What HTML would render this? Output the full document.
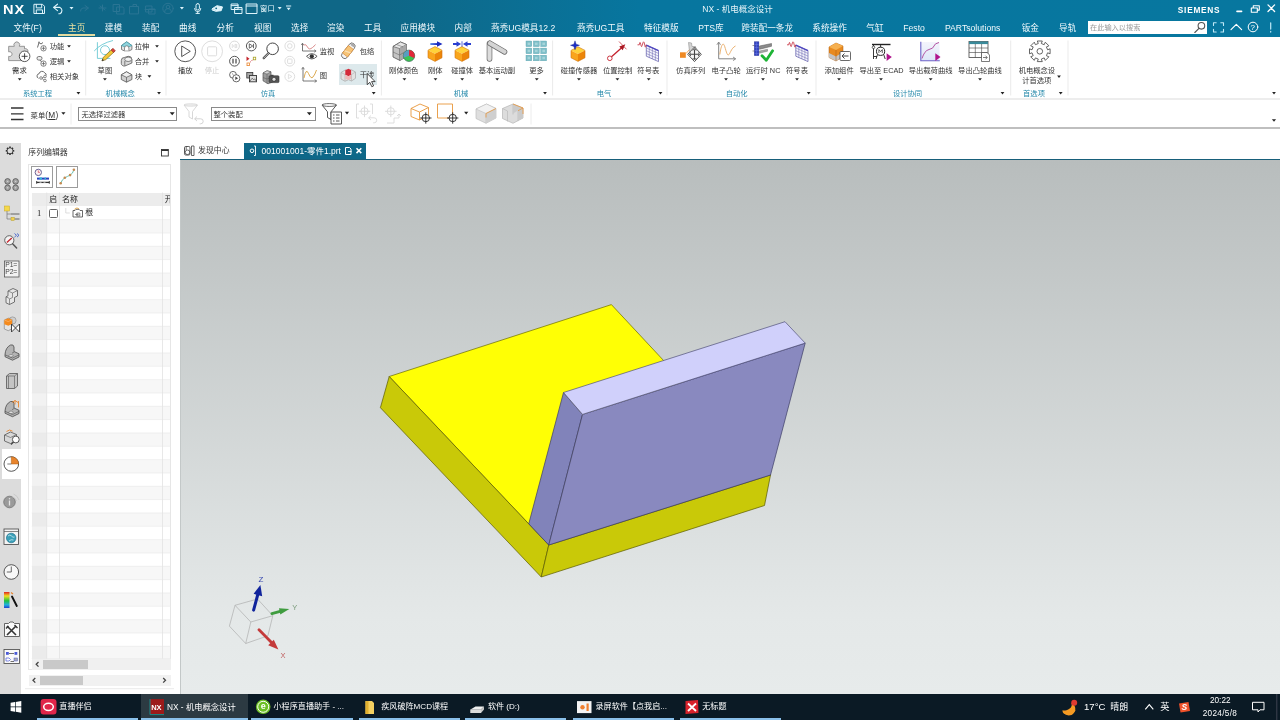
<!DOCTYPE html>
<html lang="zh-CN">
<head>
<meta charset="utf-8">
<title>NX - 机电概念设计</title>
<style>
html,body{margin:0;padding:0;}
body{width:1280px;height:720px;overflow:hidden;position:relative;background:#fff;
 font-family:"Liberation Sans","Noto Sans CJK SC",sans-serif;font-size:9px;color:#222;}
#w{position:absolute;left:0;top:0;width:1280px;height:720px;will-change:transform;}
.a{position:absolute;}
.t{position:absolute;white-space:nowrap;line-height:12px;height:12px;}
#hdr{left:0;top:0;width:1280px;height:37px;background:#0e6584;}
#hdr{background:linear-gradient(90deg,#0f6787 0%,#0f6787 30%,#07769f 50%,#07779f 100%);height:36.500px}
#hdr .t{color:#fff;font-size:9px;}
#hdr .m{top:21.500px;font-size:8.650px;color:#f2fafd;}
#ribbon{left:0;top:37px;width:1280px;height:61px;background:#fff;}
.r{font-size:7.3px;color:#333;line-height:10px;height:10px}
.g{color:#2488aa;}
.sep{position:absolute;width:1px;background:#e2e2e2;top:41px;height:56px;}
.dd{position:absolute;width:0;height:0;border-left:2.5px solid transparent;border-right:2.5px solid transparent;border-top:3px solid #222;}
#tb{left:0;top:99.500px;width:1280px;height:29.800px;background:#fff;border-bottom:2px solid #bfbfbf;box-sizing:border-box;}
#side{left:0;top:142.500px;width:21px;height:551px;background:#dcdcdc;}
#nav{left:21px;top:140px;width:158.500px;height:553px;background:#fff;}
#view{left:179.500px;top:160px;width:1100.500px;height:534px;border-left:1px solid #c3c8c8;box-sizing:border-box;background:linear-gradient(#b8bdbd 0%,#e4e8e8 85%,#e7ebeb 100%);}
#tabline{left:179.500px;top:158.500px;width:1100.500px;height:1.500px;background:#175f7a;}
#status{display:none}
#task{left:0;top:693.500px;width:1280px;height:26.500px;background:#0b1a25;}
#task .t{color:#fff;font-size:8.100px;}
.ul{top:24.700px;height:1.800px;background:#8ac0ea;}
</style>
</head>
<body>
<div id="w">
<div id="hdr" class="a">
<div class="t" style="left:2.700px;top:2.500px;font-size:13px;font-weight:bold;letter-spacing:0.900px;transform:scaleX(1.120);transform-origin:0 0;line-height:14px;height:14px">NX</div>
<svg class="a" style="left:0;top:0" width="1280" height="37" viewBox="0 0 1280 37" fill="none" stroke="#dff4fb" stroke-width="1" stroke-linecap="round" stroke-linejoin="round">
<!-- save -->
<path d="M34.3 4.3h8.2l2 2v7.2h-10.2z"/><path d="M36.3 4.5v3.4h5.4v-3.4M36.3 13.3v-3.4h6.2v3.4" />
<!-- undo -->
<path d="M57.5 4.2l-4 3.2 4 3.2M53.8 7.4h6.2a3.6 3.6 0 0 1 0 6.4h-1.2" stroke-width="1.1"/>
<path d="M69.5 7l2 2.4 2-2.4z" fill="#dff4fb" stroke="none"/>
<!-- redo dim -->
<g stroke="#2a7594">
<path d="M85 5.5l3.5 2.5-3.5 2.5M88 8h-5a3 3 0 0 0-2.5 3"/>
<path d="M99 8h7M102.5 5v6M100 6l5 4"/>
<path d="M113.5 4.5h6v7h-6zM117 7h6l1 1.5v5.5h-7z"/>
<path d="M129.5 13.5v-7h3.5v-2h3.5v2h2v7zM133 6.500h5"/>
<path d="M146 6h6v6h-6zM149 9h6v5h-6zM145 9.500h10"/>
<circle cx="168" cy="8.500" r="5.200"/><circle cx="168" cy="7" r="1.800"/><path d="M164.500 12a3.500 3.500 0 0 1 7 0"/>
</g>
<path d="M179.900 7l2 2.400 2-2.400z" fill="#dff4fb" stroke="none"/>
<!-- mic -->
<rect x="196" y="3.600" width="3.400" height="6.400" rx="1.700"/><path d="M194.600 8.500a3.100 3.100 0 0 0 6.200 0M197.700 11.600v1.800M196 13.400h3.400"/>
<!-- tag -->
<path d="M212.500 8.500l4.500-2.800 5.500 1.200-1.300 3.800-5.200 0.600z" fill="#dff4fb"/><path d="M212.500 8.500l-0.500 1.500 3 1"/>
<circle cx="216.200" cy="8.300" r="0.900" fill="#0e6584" stroke="none"/>
<!-- windows stack -->
<path d="M231.500 4h6.500v5.500h-6.500zM235 7.500h7v6h-7zM235 9.300h7M231.500 5.600h6.500"/>
<!-- window -->
<path d="M246.500 4h10.500v9.500h-10.500zM246.500 6h10.500"/>
<path d="M277.700 7l2 2.400 2-2.400z" fill="#dff4fb" stroke="none"/>
<path d="M286.600 7.800l2 2.400 2-2.400z" fill="#dff4fb" stroke="none"/><path d="M286.400 6h4.400"/>
<!-- win controls -->
<path d="M1237 11.400h4.600" stroke-width="1.600" stroke="#fff"/>
<path d="M1251.300 8h6v4.300h-6zM1253.300 7.800v-2h6v4.300h-1.800" stroke="#fff" stroke-width="1.100"/>
<path d="M1268 4.900l6.600 6.600M1274.600 4.900l-6.600 6.600" stroke="#fff" stroke-width="1.300"/>
<!-- right icons -->
<path d="M1213.500 25.500v-2.700h2.700M1220.800 22.800h2.700v2.700M1223.500 29.300v2.700h-2.700M1216.200 32h-2.700v-2.700" stroke="#bfe9f7" stroke-width="1.100"/>
<path d="M1231 29.600l5.300-5.200 5.300 5.200" stroke="#fff" stroke-width="1.200"/>
<circle cx="1253" cy="27" r="4.800" stroke="#fff"/>
<path d="M1270.700 22.800v6.300M1270.700 31.300v0.800" stroke="#bfe9f7" stroke-width="1.200"/>
</svg>
<div class="t" style="left:1250.600px;top:21.500px;font-size:8px;line-height:11px;height:11px">?</div>
<div class="t" style="left:260px;top:3px;font-size:7.400px;line-height:11px;height:11px;color:#e6f6fb">窗口</div>
<div class="t" style="left:702.300px;top:4px;font-size:8.500px;line-height:11px;height:11px;color:#e6f4f9">NX - 机电概念设计</div>
<div class="t" style="left:1177.800px;top:5.300px;font-size:8.300px;font-weight:bold;letter-spacing:0.750px;line-height:11px;height:11px">SIEMENS</div>
<div class="a" style="left:57.500px;top:34.300px;width:37px;height:2px;background:#e3dba0"></div>
<div class="a" style="left:1088px;top:20.500px;width:118.500px;height:13px;background:#fff"></div>
<div class="t" style="left:1090px;top:21.500px;font-size:7.200px;color:#9a9a9a;line-height:11px;height:11px">在此输入以搜索</div>
<svg class="a" style="left:1192px;top:20px" width="16" height="15" viewBox="0 0 16 15" fill="none" stroke="#555" stroke-width="1.100" stroke-linecap="round"><circle cx="9.400" cy="5.800" r="3.300"/><path d="M7 8.300l-4.200 4.200"/></svg>
<div class="t m" style="left:13.5px">文件(F)</div>
<div class="t m" style="left:68px;color:#e9e0a0">主页</div>
<div class="t m" style="left:104.75px">建模</div>
<div class="t m" style="left:142px">装配</div>
<div class="t m" style="left:179px">曲线</div>
<div class="t m" style="left:216.5px">分析</div>
<div class="t m" style="left:254px">视图</div>
<div class="t m" style="left:291px">选择</div>
<div class="t m" style="left:327px">渲染</div>
<div class="t m" style="left:364px">工具</div>
<div class="t m" style="left:400.5px">应用模块</div>
<div class="t m" style="left:454.5px">内部</div>
<div class="t m" style="left:491px">燕秀UG模具12.2</div>
<div class="t m" style="left:577px">燕秀UG工具</div>
<div class="t m" style="left:644px">特征模版</div>
<div class="t m" style="left:698.3px">PTS库</div>
<div class="t m" style="left:741.3px">跨装配一条龙</div>
<div class="t m" style="left:812.3px">系统操作</div>
<div class="t m" style="left:866.3px">气缸</div>
<div class="t m" style="left:903.3px">Festo</div>
<div class="t m" style="left:945px">PARTsolutions</div>
<div class="t m" style="left:1021.7px">钣金</div>
<div class="t m" style="left:1059px">导轨</div>
</div>
<div id="ribbon" class="a"></div>
<div class="a" style="left:0;top:97.500px;width:1280px;height:2.200px;background:#ededed"></div>
<div class="t r " style="left:19.4px;top:65.9px;transform:translateX(-50%)">需求</div>
<div class="t r " style="left:49.8px;top:42.2px">功能</div>
<div class="t r " style="left:49.8px;top:57.2px">逻辑</div>
<div class="t r " style="left:49.8px;top:72.3px">相关对象</div>
<div class="t r g" style="left:37.5px;top:89.0px;transform:translateX(-50%)">系统工程</div>
<div class="t r " style="left:104.9px;top:65.9px;transform:translateX(-50%)">草图</div>
<div class="t r " style="left:134.8px;top:42.2px">拉伸</div>
<div class="t r " style="left:134.8px;top:57.2px">合并</div>
<div class="t r " style="left:134.8px;top:72.3px">块</div>
<div class="t r g" style="left:120.2px;top:89.0px;transform:translateX(-50%)">机械概念</div>
<div class="t r " style="left:185.3px;top:66.1px;transform:translateX(-50%)">播放</div>
<div class="t r " style="left:212.1px;top:66.1px;transform:translateX(-50%);color:#cfcfcf">停止</div>
<div class="t r " style="left:319.7px;top:47.1px">监视</div>
<div class="t r " style="left:319.7px;top:71.0px">图</div>
<div class="t r " style="left:359.8px;top:47.1px">包络</div>
<div class="a" style="left:339px;top:64.300px;width:37.500px;height:20.500px;background:#dde9ec"></div>
<div class="t r " style="left:359.8px;top:70.3px">干涉</div>
<div class="t r g" style="left:268.0px;top:89.0px;transform:translateX(-50%)">仿真</div>
<div class="t r " style="left:403.7px;top:65.9px;transform:translateX(-50%)">刚体颜色</div>
<div class="t r " style="left:435.2px;top:65.9px;transform:translateX(-50%)">刚体</div>
<div class="t r " style="left:462.1px;top:65.9px;transform:translateX(-50%)">碰撞体</div>
<div class="t r " style="left:496.9px;top:65.9px;transform:translateX(-50%)">基本运动副</div>
<div class="t r " style="left:536.6px;top:65.9px;transform:translateX(-50%)">更多</div>
<div class="t r g" style="left:461.0px;top:89.0px;transform:translateX(-50%)">机械</div>
<div class="t r " style="left:579.0px;top:65.9px;transform:translateX(-50%)">碰撞传感器</div>
<div class="t r " style="left:617.6px;top:65.9px;transform:translateX(-50%)">位置控制</div>
<div class="t r " style="left:648.3px;top:65.9px;transform:translateX(-50%)">符号表</div>
<div class="t r g" style="left:604.0px;top:89.0px;transform:translateX(-50%)">电气</div>
<div class="t r " style="left:690.7px;top:65.9px;transform:translateX(-50%)">仿真序列</div>
<div class="t r " style="left:726.1px;top:65.9px;transform:translateX(-50%)">电子凸轮</div>
<div class="t r " style="left:763.2px;top:65.9px;transform:translateX(-50%)">运行时 NC</div>
<div class="t r " style="left:797.0px;top:65.9px;transform:translateX(-50%)">符号表</div>
<div class="t r g" style="left:736.6px;top:89.0px;transform:translateX(-50%)">自动化</div>
<div class="t r " style="left:839.1px;top:65.9px;transform:translateX(-50%)">添加组件</div>
<div class="t r " style="left:881.5px;top:65.9px;transform:translateX(-50%)">导出至 ECAD</div>
<div class="t r " style="left:930.6px;top:65.9px;transform:translateX(-50%)">导出载荷曲线</div>
<div class="t r " style="left:980.0px;top:65.9px;transform:translateX(-50%)">导出凸轮曲线</div>
<div class="t r g" style="left:907.5px;top:89.0px;transform:translateX(-50%)">设计协同</div>
<div class="t r " style="left:1036.9px;top:65.6px;transform:translateX(-50%)">机电概念设</div>
<div class="t r " style="left:1036.8px;top:76.3px;transform:translateX(-50%)">计首选项</div>
<div class="t r g" style="left:1034.0px;top:89.0px;transform:translateX(-50%)">首选项</div>
<svg class="a" style="left:0;top:0" width="1280" height="100" viewBox="0 0 1280 100">
<path d="M8.700 46.300h5.600a2.900 2.900 0 1 1 5 0h5.200v2.500a2.500 2.500 0 1 1 0 4.600v7.200h-15.800v-4.300a2.400 2.400 0 1 0 0-4.400z" fill="#d9d9d9" stroke="#8c8c8c" stroke-width="0.900"/>
<circle cx="24.600" cy="56.300" r="5.300" fill="#fff" stroke="#444" stroke-width="0.900"/><path d="M21.600 56.300h6M24.600 53.300v6" stroke="#333" stroke-width="0.900"/>
<path d="M17.8 78.2h3.800l-1.900 2.400z" fill="#222" stroke="none"/>
<path d="M37.500 47.500l1.500-5 2 1.500 2-1.500" fill="none" stroke="#5a5a5a" stroke-width="0.900"/><circle cx="39" cy="42.500" r="1" fill="#888"/>
<circle cx="43.5" cy="48.3" r="2.7" fill="#fff" stroke="#555" stroke-width="0.700"/><path d="M41.6 48.3h3.8M43.5 46.4v3.8" stroke="#555" stroke-width="0.700"/>
<rect x="37" y="56.500" width="5" height="3.600" rx="1.700" fill="#eee" stroke="#5a5a5a" stroke-width="0.800"/><path d="M40 60l2 2.500" stroke="#5a5a5a" stroke-width="0.800"/>
<circle cx="43.5" cy="63.6" r="2.7" fill="#fff" stroke="#555" stroke-width="0.700"/><path d="M41.6 63.6h3.8M43.5 61.7v3.8" stroke="#555" stroke-width="0.700"/>
<path d="M38.500 78.300a2.400 2.400 0 0 1 0.600-4.600a3 3 0 0 1 5.600-0.800a2.300 2.300 0 0 1 1.500 2.500" fill="none" stroke="#5a5a5a" stroke-width="0.900"/><circle cx="41" cy="78" r="1.300" fill="#fff" stroke="#5a5a5a" stroke-width="0.700"/><circle cx="45" cy="76.500" r="1.300" fill="#fff" stroke="#5a5a5a" stroke-width="0.700"/><circle cx="45" cy="80.500" r="1.300" fill="#fff" stroke="#5a5a5a" stroke-width="0.700"/><path d="M42 78l2-1M42 78.500l2 1.500" stroke="#5a5a5a" stroke-width="0.600"/>
<path d="M67.1 45.2h3.800l-1.900 2.400z" fill="#222" stroke="none"/>
<path d="M67.1 60.2h3.800l-1.900 2.400z" fill="#222" stroke="none"/>
<path d="M76.5 92.0h3.800l-1.900 2.400z" fill="#222" stroke="none"/>
<path d="M85.7 40.500V95.500" stroke="#ebebeb" stroke-width="1"/>
<path d="M94.200 51q6.500-7.500 18.800-10.500M97.400 42.200v16.200h13" fill="none" stroke="#6cc8d2" stroke-width="0.900"/><circle cx="105" cy="50.200" r="4.500" fill="none" stroke="#6cc8d2" stroke-width="0.900"/>
<g transform="rotate(-42.700 102 60.800)"><path d="M102 60.800l3.400-1.700h12.200v3.400h-12.200z" fill="#f2c838" stroke="#7a6420" stroke-width="0.600" stroke-linejoin="round"/><path d="M116 59.100h2.600v3.400h-2.600z" fill="#d8433b" stroke="#8a2a25" stroke-width="0.500"/><path d="M102 60.800l1.500-0.750v1.500z" fill="#333" stroke="#333" stroke-width="0.400"/></g>
<path d="M103.0 78.2h3.800l-1.900 2.400z" fill="#222" stroke="none"/>
<path d="M121.500 45.500l5.200-3.700 5.200 3.700v4l-2.600 1.300h-5.200l-2.600-1.300z" fill="#e4e4e4" stroke="#666" stroke-width="0.800"/><path d="M121.500 45.500l5.200-3.700 5.200 3.700-5.200 2.200z" fill="#8fd3dc" stroke="#3d9dac" stroke-width="0.700"/><path d="M124.500 50.500v-2.500a2.200 2.200 0 0 1 4.400 0v2.500" fill="#fff" stroke="#666" stroke-width="0.700"/>
<path d="M121.300 60.500a3 3 0 0 1 3-3l4-1.200a3.400 3.400 0 0 1 3.600 3.200v3.500l-7 3a3 2.600 0 0 1-3.600-2.500z" fill="#d8d8d8" stroke="#555" stroke-width="0.800"/><ellipse cx="128.200" cy="59.300" rx="3.500" ry="2.200" fill="#f2f2f2" stroke="#555" stroke-width="0.700"/><path d="M124.800 61v4.500" stroke="#555" stroke-width="0.700"/>
<path d="M121.300 74.800l5.200-3 5.400 3v4.700l-5.400 2.700-5.200-2.700z" fill="#cfcfcf" stroke="#555" stroke-width="0.800" stroke-linejoin="round"/><path d="M121.300 74.800l5.200-3 5.400 3-5.400 2.500z" fill="#efefef" stroke="#555" stroke-width="0.700" stroke-linejoin="round"/><path d="M126.500 77.300v4.900" stroke="#555" stroke-width="0.700"/>
<path d="M155.1 45.2h3.800l-1.900 2.400z" fill="#222" stroke="none"/>
<path d="M155.1 60.2h3.800l-1.900 2.400z" fill="#222" stroke="none"/>
<path d="M147.5 75.3h3.800l-1.900 2.400z" fill="#222" stroke="none"/>
<path d="M157.1 92.0h3.800l-1.900 2.400z" fill="#222" stroke="none"/>
<path d="M166.0 40.500V95.500" stroke="#ebebeb" stroke-width="1"/>
<circle cx="185.200" cy="51.300" r="10.400" fill="#fff" stroke="#444" stroke-width="0.900"/><path d="M181.700 46l8.600 5.300-8.600 5.300z" fill="none" stroke="#444" stroke-width="0.900" stroke-linejoin="round"/>
<circle cx="212.100" cy="51.300" r="10.400" fill="#fff" stroke="#d9d9d9" stroke-width="0.900"/><rect x="207.600" y="46.800" width="9" height="9" rx="1" fill="none" stroke="#d9d9d9" stroke-width="0.900"/>
<circle cx="234.5" cy="46.0" r="4.9" fill="#fff" stroke="#d5d5d5" stroke-width="0.900"/>
<path d="M232.300 44v4M236.700 44v4M235.800 44.200l-2.600 1.800 2.600 1.800z" fill="none" stroke="#d5d5d5" stroke-width="0.700"/>
<circle cx="234.5" cy="61.2" r="4.9" fill="#fff" stroke="#444" stroke-width="0.900"/>
<path d="M233 58.800v4.800M236 58.800v4.800" stroke="#444" stroke-width="1.200"/>
<circle cx="233" cy="74.800" r="3.400" fill="#fff" stroke="#444" stroke-width="0.800"/><circle cx="236.300" cy="78.300" r="3.600" fill="#fff" stroke="#444" stroke-width="0.800"/><path d="M235.300 76.600l2.800 1.700-2.800 1.700z" fill="#444"/><path d="M232 73.500l1.500 1.300" stroke="#444" stroke-width="0.600"/>
<circle cx="251.3" cy="46.0" r="4.9" fill="#fff" stroke="#444" stroke-width="0.900"/>
<path d="M249.300 43.800l3.400 2.200-3.400 2.200zM253.500 43.800v4.400" fill="none" stroke="#444" stroke-width="0.800"/>
<path d="M246.500 56.500l3 2.300-3 2.300z" fill="#c4262e"/><rect x="253.300" y="57.200" width="2.400" height="2.600" fill="none" stroke="#a8a020" stroke-width="0.800"/><rect x="247" y="63" width="2.400" height="2.600" fill="none" stroke="#e8842c" stroke-width="0.800"/><path d="M250.200 62.200l2.600-2.600" stroke="#c4262e" stroke-width="0.900" stroke-dasharray="1 0.700"/>
<rect x="246.800" y="72.500" width="6" height="5.500" fill="#aaa" stroke="#333" stroke-width="0.800"/><rect x="249.500" y="75.500" width="7" height="6.300" fill="#ddd" stroke="#333" stroke-width="0.900"/><path d="M250 81l2.200-2.800 1.500 1.600 1-1 1.500 2.200" fill="none" stroke="#333" stroke-width="0.600"/>
<circle cx="272.600" cy="48.800" r="5.800" fill="#fff" stroke="#444" stroke-width="1"/><path d="M268.500 53.300l-4.800 4.800" stroke="#444" stroke-width="2.200" stroke-linecap="round"/><path d="M268.500 53.300l-4.800 4.800" stroke="#fff" stroke-width="0.700" stroke-linecap="round"/>
<path d="M263 73l4-2.200 4 1 0 3.500 2 0.500v6l-5 2-5-3z" fill="#9c9c9c" stroke="#555" stroke-width="0.700"/><path d="M263 73l4-2.200 4 1-4 2.200z" fill="#d5d5d5" stroke="#555" stroke-width="0.500"/><path d="M263 77.500l4 1.500 4-1.500M267 74v9.500" stroke="#555" stroke-width="0.500" fill="none"/><rect x="269" y="75.800" width="10" height="6.800" rx="1" fill="#555" stroke="#333" stroke-width="0.600"/><circle cx="274" cy="79.300" r="2" fill="#ddd" stroke="#222" stroke-width="0.600"/><rect x="270.500" y="74.800" width="3" height="1.300" fill="#444"/>
<circle cx="289.8" cy="46.0" r="4.9" fill="#fff" stroke="#dadada" stroke-width="0.900"/>
<circle cx="289.800" cy="46" r="2.300" fill="none" stroke="#dadada" stroke-width="0.900"/>
<circle cx="289.8" cy="61.2" r="4.9" fill="#fff" stroke="#dadada" stroke-width="0.900"/>
<rect x="287.600" y="59" width="4.400" height="4.400" rx="0.600" fill="none" stroke="#dadada" stroke-width="0.900"/>
<circle cx="289.8" cy="76.5" r="4.9" fill="#fff" stroke="#dadada" stroke-width="0.900"/>
<path d="M288.400 74.300l3.500 2.200-3.500 2.200z" fill="none" stroke="#dadada" stroke-width="0.800"/>
<path d="M302.500 43.500v7.500h13" fill="none" stroke="#555" stroke-width="0.800"/><path d="M301.300 45l1.200-1.800 1.200 1.800M314.300 49.800l1.800 1.200-1.800 1.200" fill="none" stroke="#555" stroke-width="0.700"/><path d="M303.500 45q2.500-1.500 4 2t5 0.500t3-3" fill="none" stroke="#d07070" stroke-width="0.800"/><path d="M306.500 56.300q5.300-5.300 10.600 0q-5.300 5.300-10.600 0z" fill="#fff" stroke="#333" stroke-width="0.800"/><circle cx="311.800" cy="56.300" r="2.100" fill="#333"/>
<path d="M303 67.500v13.500h13.500" fill="none" stroke="#555" stroke-width="0.800"/><path d="M301.600 69.300l1.400-2 1.400 2M314.700 79.600l2 1.400-2 1.400" fill="none" stroke="#555" stroke-width="0.700"/><path d="M304 78q2-10.500 4.500-4.500t4.500 3.500t3.500-7" fill="none" stroke="#d8a040" stroke-width="0.900"/>
<g transform="rotate(-52 348.300 50.800)"><rect x="339.300" y="47.600" width="18" height="6.400" rx="3.200" fill="#f3f3f3" stroke="#666" stroke-width="0.800"/><rect x="343" y="47.600" width="9.500" height="6.400" fill="#f6c478" stroke="#e0903a" stroke-width="0.700"/><path d="M346 47.800l2 6" stroke="#fbe2b8" stroke-width="1.200"/><rect x="354.300" y="48.400" width="2.600" height="4.800" rx="1.300" fill="#aaa"/></g>
<path d="M341 72.500l4.500-2.700 3 1.300 3-1.300 4 2.200v6.300l-4 2.700-3-1.300-3.500 1.600-4-2.300z" fill="#e2e2e2" stroke="#a8a8a8" stroke-width="0.700" stroke-linejoin="round"/><path d="M341 72.500l4 2v6.500M355.500 72l-4 2.500v6.500M345 74.500l3.500-1.700 3 1.700" fill="none" stroke="#b0b0b0" stroke-width="0.600"/><path d="M345.300 70.300l3.200-1.600 2.600 1.300v4.800l-2.600 1.400-3.200-1.500z" fill="#d42a3a"/><path d="M345.300 74.700l3.200 1.500 2.600-1.400v4l-2.600 1.200-3.200-1.300z" fill="#f0b8b8"/>
<path d="M367.200 73.500v11.200l2.600-2.400 2 4.400 1.800-0.800-2-4.300h3.500z" fill="#fff" stroke="#222" stroke-width="0.800" stroke-linejoin="round"/>
<path d="M371.8 92.0h3.800l-1.900 2.400z" fill="#222" stroke="none"/>
<path d="M381.4 40.500V95.500" stroke="#ebebeb" stroke-width="1"/>
<path d="M393 46.500l7.500-4.500 6 2.500v12l-6.500 4-7-3.500z" fill="#c4c4c4" stroke="#505050" stroke-width="0.800" stroke-linejoin="round"/><path d="M393 46.500l7.500-4.500 6 2.500-7 4z" fill="#e6e6e6" stroke="#505050" stroke-width="0.600"/><path d="M399.500 48.500l7-4v12l-6.500 4z" fill="#a8a8a8"/><path d="M393 52l6.500 3 7-4M399.500 48.500v12M396.500 44.500l6.500 2.500" stroke="#5a5a5a" stroke-width="0.500" fill="none"/>
<circle cx="409" cy="55.800" r="5.700" fill="#3cc452" stroke="#2a5a4a" stroke-width="0.600"/><path d="M409 55.800v-5.700a5.700 5.700 0 0 1 5.200 8z" fill="#e0283a"/><path d="M409 55.800l-5.300 2a5.700 5.700 0 0 1 5.300-7.700z" fill="#5a9cc0"/>
<path d="M402.5 78.2h3.800l-1.900 2.400z" fill="#222" stroke="none"/>
<path d="M435.0 46.6l7.0 3.6-7.0 3.6-7.0-3.6z" fill="#ffd23a"/>
<path d="M428.0 50.2l7.0 3.6v7.6l-7.0-3.6z" fill="#f9a51c"/>
<path d="M435.0 53.8l7.0-3.6v7.6l-7.0 3.6z" fill="#ec8508"/>
<path d="M435.0 46.6l7.0 3.6v7.6l-7.0 3.6-7.0-3.6v-7.6z" fill="none" stroke="#d07410" stroke-width="0.600" stroke-linejoin="round"/>
<defs><linearGradient id="ba" x1="0" x2="1" y1="0" y2="0"><stop offset="0" stop-color="#5a8ae8"/><stop offset="1" stop-color="#1a2ac0"/></linearGradient></defs><path d="M430.300 43.100h7v1.900h-7z" fill="url(#ba)"/><path d="M437 41.200l5.500 2.800-5.500 2.800z" fill="#1a2ac0"/>
<path d="M433.6 78.2h3.800l-1.900 2.400z" fill="#222" stroke="none"/>
<path d="M462.0 46.6l7.0 3.6-7.0 3.6-7.0-3.6z" fill="#ffd23a"/>
<path d="M455.0 50.2l7.0 3.6v7.6l-7.0-3.6z" fill="#f9a51c"/>
<path d="M462.0 53.8l7.0-3.6v7.6l-7.0 3.6z" fill="#ec8508"/>
<path d="M462.0 46.6l7.0 3.6v7.6l-7.0 3.6-7.0-3.6v-7.6z" fill="none" stroke="#d07410" stroke-width="0.600" stroke-linejoin="round"/>
<path d="M453 44h4M467 44h4" stroke="#2a3fd0" stroke-width="2"/><path d="M456.500 41.300l4.600 2.700-4.600 2.700zM467.500 41.300l-4.600 2.700 4.600 2.700z" fill="#2a3fd0"/><path d="M462 41.300v5.400" stroke="#2a3fd0" stroke-width="0.800"/>
<path d="M460.3 78.2h3.800l-1.900 2.400z" fill="#222" stroke="none"/>
<path d="M489.500 43.500v15.500" stroke="#6a6a6a" stroke-width="5.600" stroke-linecap="round"/><path d="M489.500 43.500v15.500" stroke="#dcdcdc" stroke-width="4.200" stroke-linecap="round"/><path d="M490 43.300l14.500 8.500" stroke="#6a6a6a" stroke-width="5.600" stroke-linecap="round"/><path d="M490 43.300l14.500 8.500" stroke="#d4d4d4" stroke-width="4.200" stroke-linecap="round"/>
<path d="M495.3 78.2h3.800l-1.900 2.400z" fill="#222" stroke="none"/>
<rect x="526.0" y="41.0" width="5.800" height="5.600" fill="#7fbfc9" stroke="#5aa3b0" stroke-width="0.400"/>
<rect x="527.6" y="42.6" width="2.600" height="2.400" fill="#a5d4da"/>
<rect x="533.4" y="41.0" width="5.800" height="5.600" fill="#7fbfc9" stroke="#5aa3b0" stroke-width="0.400"/>
<rect x="535.0" y="42.6" width="2.600" height="2.400" fill="#a5d4da"/>
<rect x="540.8" y="41.0" width="5.800" height="5.600" fill="#7fbfc9" stroke="#5aa3b0" stroke-width="0.400"/>
<rect x="542.4" y="42.6" width="2.600" height="2.400" fill="#a5d4da"/>
<rect x="526.0" y="48.1" width="5.800" height="5.600" fill="#7fbfc9" stroke="#5aa3b0" stroke-width="0.400"/>
<rect x="527.6" y="49.7" width="2.600" height="2.400" fill="#a5d4da"/>
<rect x="533.4" y="48.1" width="5.800" height="5.600" fill="#7fbfc9" stroke="#5aa3b0" stroke-width="0.400"/>
<rect x="535.0" y="49.7" width="2.600" height="2.400" fill="#a5d4da"/>
<rect x="540.8" y="48.1" width="5.800" height="5.600" fill="#7fbfc9" stroke="#5aa3b0" stroke-width="0.400"/>
<rect x="542.4" y="49.7" width="2.600" height="2.400" fill="#a5d4da"/>
<rect x="526.0" y="55.2" width="5.800" height="5.600" fill="#7fbfc9" stroke="#5aa3b0" stroke-width="0.400"/>
<rect x="527.6" y="56.8" width="2.600" height="2.400" fill="#a5d4da"/>
<rect x="533.4" y="55.2" width="5.800" height="5.600" fill="#7fbfc9" stroke="#5aa3b0" stroke-width="0.400"/>
<rect x="535.0" y="56.8" width="2.600" height="2.400" fill="#a5d4da"/>
<rect x="540.8" y="55.2" width="5.800" height="5.600" fill="#7fbfc9" stroke="#5aa3b0" stroke-width="0.400"/>
<rect x="542.4" y="56.8" width="2.600" height="2.400" fill="#a5d4da"/>
<path d="M534.9 78.2h3.800l-1.900 2.400z" fill="#222" stroke="none"/>
<path d="M543.1 92.0h3.800l-1.900 2.400z" fill="#222" stroke="none"/>
<path d="M552.6 40.500V95.500" stroke="#ebebeb" stroke-width="1"/>
<path d="M578.0 46.8l7.0 3.6-7.0 3.6-7.0-3.6z" fill="#ffd23a"/>
<path d="M571.0 50.4l7.0 3.6v7.4l-7.0-3.6z" fill="#f9a51c"/>
<path d="M578.0 54.0l7.0-3.6v7.4l-7.0 3.6z" fill="#ec8508"/>
<path d="M578.0 46.8l7.0 3.6v7.4l-7.0 3.6-7.0-3.6v-7.4z" fill="none" stroke="#d07410" stroke-width="0.600" stroke-linejoin="round"/>
<path d="M575 40.800l1.100 3.400 3.400 1.100-3.400 1.100-1.100 3.400-1.100-3.400-3.400-1.100 3.400-1.100z" fill="#1d2fc8" stroke="#101a80" stroke-width="0.400"/>
<path d="M577.0 78.2h3.800l-1.900 2.400z" fill="#222" stroke="none"/>
<circle cx="609.800" cy="58.300" r="2.300" fill="#fff" stroke="#c4202c" stroke-width="0.900"/><path d="M611.500 56.700l11-9.800" stroke="#c4202c" stroke-width="1.300"/><path d="M625.300 44.300l-2.600 6-3.400-3.700z" fill="#a81822"/><path d="M619 41.500l7.500 7.800" stroke="#c4202c" stroke-width="0.700"/>
<path d="M615.5 78.2h3.800l-1.900 2.400z" fill="#222" stroke="none"/>
<path d="M646.3 45.2l12.2 5.4v11.0l-12.2-5.4z" fill="#f4f4fc" stroke="#5a56a8" stroke-width="0.700"/>
<path d="M649.3 46.6v11.0" stroke="#6a66b0" stroke-width="0.500"/>
<path d="M652.4 47.9v11.0" stroke="#6a66b0" stroke-width="0.500"/>
<path d="M655.4 49.2v11.0" stroke="#6a66b0" stroke-width="0.500"/>
<path d="M646.3 48.0l12.2 5.4" stroke="#6a66b0" stroke-width="0.500"/>
<path d="M646.3 50.7l12.2 5.4" stroke="#6a66b0" stroke-width="0.500"/>
<path d="M646.3 53.5l12.2 5.4" stroke="#6a66b0" stroke-width="0.500"/>
<path d="M646.3 45.2l12.2 5.4" stroke="#5048c0" stroke-width="1.300"/>
<path d="M637.5 44.800h1.800q0.600-4.500 1.400-0.500t1.500 1t1.300-3.500t1.300 3.500t1.300-0.500" fill="none" stroke="#c42838" stroke-width="0.800"/>
<path d="M646.8 78.2h3.800l-1.900 2.400z" fill="#222" stroke="none"/>
<path d="M658.6 92.0h3.800l-1.900 2.400z" fill="#222" stroke="none"/>
<path d="M667.0 40.500V95.500" stroke="#ebebeb" stroke-width="1"/>
<rect x="680" y="52.300" width="5.800" height="5.500" fill="#f08a24"/><path d="M686 53.500l4-4.500" stroke="#f0a050" stroke-width="0.900"/><path d="M688.500 42.500l3 0.500 0.500 3.500h3.500l1 5h-7z" fill="#d4d4d4" stroke="#909090" stroke-width="0.600"/>
<path d="M694.500 47l6.800 7.300-6.800 7.300-6.800-7.300z" fill="#f6f6f6" stroke="#444" stroke-width="0.900" stroke-linejoin="round"/><path d="M694.500 49.500v9.600M690 54.300h9" stroke="#444" stroke-width="1.100"/><path d="M692.800 50.500l1.700-1.900 1.700 1.900M692.800 58.100l1.700 1.900 1.700-1.900M691 52.600l-1.800 1.700 1.800 1.700M698 52.600l1.800 1.700-1.800 1.700" fill="none" stroke="#444" stroke-width="0.900"/>
<path d="M718.700 42.500v16.300h16.500" fill="none" stroke="#777" stroke-width="0.900"/><path d="M716.900 44.800l1.800-2.800 1.800 2.800M733 57l2.800 1.800-2.800 1.800" fill="none" stroke="#777" stroke-width="0.800"/><path d="M719.800 54.500C721 46 722.500 43 723.800 44.500S726.500 55 728.200 55S731 48 735.500 46" fill="none" stroke="#e8a860" stroke-width="0.900"/>
<path d="M724.1 78.2h3.800l-1.900 2.400z" fill="#222" stroke="none"/>
<rect x="754.300" y="41.800" width="4.600" height="13.800" fill="#3444c0" stroke="#1a2490" stroke-width="0.400"/><path d="M754.500 44.500h4.200M754.500 47.500h4.200M754.500 50.500h4.200M754.500 53.500h4.200M756.600 42v13.500" stroke="#6a7ae0" stroke-width="0.500"/><path d="M759.500 46l12-2.500v2.800l-12 3z" fill="#8a8a8a" stroke="#555" stroke-width="0.500"/><path d="M759.500 51l8-1.800v2l-8 2z" fill="#a8a8a8" stroke="#666" stroke-width="0.400"/><path d="M752.500 51l2 0M752.500 45.500h2" stroke="#555" stroke-width="0.600"/><path d="M762 55.800l4.300 4.400 6.300-9.400" fill="none" stroke="#1eb436" stroke-width="2.800" stroke-linecap="round" stroke-linejoin="round"/>
<path d="M761.1 78.2h3.800l-1.900 2.400z" fill="#222" stroke="none"/>
<path d="M795.8 45.2l12.2 5.4v11.0l-12.2-5.4z" fill="#f4f4fc" stroke="#5a56a8" stroke-width="0.700"/>
<path d="M798.8 46.6v11.0" stroke="#6a66b0" stroke-width="0.500"/>
<path d="M801.9 47.9v11.0" stroke="#6a66b0" stroke-width="0.500"/>
<path d="M804.9 49.2v11.0" stroke="#6a66b0" stroke-width="0.500"/>
<path d="M795.8 48.0l12.2 5.4" stroke="#6a66b0" stroke-width="0.500"/>
<path d="M795.8 50.7l12.2 5.4" stroke="#6a66b0" stroke-width="0.500"/>
<path d="M795.8 53.5l12.2 5.4" stroke="#6a66b0" stroke-width="0.500"/>
<path d="M795.8 45.2l12.2 5.4" stroke="#5048c0" stroke-width="1.300"/>
<path d="M787.0 44.800h1.800q0.600-4.500 1.400-0.500t1.500 1t1.300-3.500t1.300 3.500t1.300-0.500" fill="none" stroke="#c42838" stroke-width="0.800"/>
<path d="M795.1 78.2h3.800l-1.900 2.400z" fill="#222" stroke="none"/>
<path d="M806.8 92.0h3.800l-1.900 2.400z" fill="#222" stroke="none"/>
<path d="M816.0 40.500V95.500" stroke="#ebebeb" stroke-width="1"/>
<path d="M829 47l7-4 7 3v10.500l-7 4.500-7-3.500z" fill="#e88a20" stroke="#a85a10" stroke-width="0.500"/><path d="M829 47l7-4 7 3-7 4z" fill="#f6b050"/><path d="M829 53l7 3.500 7-4.500v4.500l-7 4.500-7-3.500z" fill="#c4c4c4"/><path d="M836 50v11" stroke="#a85a10" stroke-width="0.500"/><rect x="840" y="51.500" width="10.500" height="9" rx="1" fill="#fff" stroke="#444" stroke-width="0.800"/><path d="M848.500 56h-6M844.500 53.500l-2.500 2.500 2.500 2.500" fill="none" stroke="#444" stroke-width="1"/>
<path d="M837.1 78.2h3.800l-1.900 2.400z" fill="#222" stroke="none"/>
<path d="M872 44.500h18.500" stroke="#222" stroke-width="1.400"/><path d="M873.500 44.500v14.500M880.600 44.500v3" fill="none" stroke="#222" stroke-width="0.900"/><circle cx="873.500" cy="47.300" r="1.300" fill="#fff" stroke="#222" stroke-width="0.700"/><circle cx="880.600" cy="51.300" r="4.100" fill="#fff" stroke="#222" stroke-width="1"/><path d="M878.900 53v-3.400l1.700 2 1.700-2v3.400" fill="none" stroke="#222" stroke-width="0.700"/><path d="M877.500 54.500l-1.500 4.500M883.700 54.500l1.500 4.500M873.500 56.500h3.500" fill="none" stroke="#222" stroke-width="0.900"/><path d="M886.600 53.300l5.200 3.800-5.200 3.800z" fill="#b0148c"/>
<path d="M879.1 78.2h3.800l-1.900 2.400z" fill="#222" stroke="none"/>
<defs><linearGradient id="lg2" x1="0" x2="0" y1="0" y2="1"><stop offset="0" stop-color="#f4f4fc"/><stop offset="1" stop-color="#dde6f8"/></linearGradient></defs><rect x="921" y="42" width="18.500" height="18.500" fill="url(#lg2)" stroke="none"/><path d="M920.800 41.800v19h19" fill="none" stroke="#6a60c8" stroke-width="1.100"/><path d="M922 58.500q2.500-8 7-9t5-3.500t5-3.500" fill="none" stroke="#b455a4" stroke-width="1"/><path d="M935.300 53.300l5.200 3.800-5.200 3.800z" fill="#b0148c"/>
<path d="M928.8 78.2h3.800l-1.900 2.400z" fill="#222" stroke="none"/>
<rect x="969" y="41.500" width="19" height="16" fill="#fff" stroke="#444" stroke-width="0.800"/><rect x="969" y="41.500" width="19" height="2.600" fill="#3a8a9a"/><path d="M969 48h19M969 52.500h19M975.300 44v13.500M981.600 44v13.500" stroke="#444" stroke-width="0.600"/><path d="M981.500 52.500h5.500l2.500 2.500v6.500h-8z" fill="#fff" stroke="#444" stroke-width="0.700"/><path d="M983 57.500h4M985.500 55.700l1.800 1.800-1.800 1.800" fill="none" stroke="#444" stroke-width="0.700"/>
<path d="M978.1 78.2h3.800l-1.900 2.400z" fill="#222" stroke="none"/>
<path d="M1000.6 92.0h3.800l-1.900 2.400z" fill="#222" stroke="none"/>
<path d="M1010.7 40.500V95.500" stroke="#ebebeb" stroke-width="1"/>
<path d="M1037.3 41.0 L1042.3 41.0 L1041.3 43.5 L1044.2 44.7 L1045.3 42.2 L1048.9 45.8 L1046.4 46.9 L1047.6 49.8 L1050.1 48.8 L1050.1 53.8 L1047.6 52.8 L1046.4 55.7 L1048.9 56.8 L1045.3 60.4 L1044.2 57.9 L1041.3 59.1 L1042.3 61.6 L1037.3 61.6 L1038.3 59.1 L1035.4 57.9 L1034.3 60.4 L1030.7 56.8 L1033.2 55.7 L1032.0 52.8 L1029.5 53.8 L1029.5 48.8 L1032.0 49.8 L1033.2 46.9 L1030.7 45.8 L1034.3 42.2 L1035.4 44.7 L1038.3 43.5z" fill="#fff" stroke="#555" stroke-width="0.900" stroke-linejoin="round"/><circle cx="1039.8" cy="51.3" r="2.800" fill="#fff" stroke="#555" stroke-width="0.900"/>
<path d="M1057.1 75.6h3.800l-1.900 2.400z" fill="#222" stroke="none"/>
<path d="M1058.8 92.0h3.800l-1.900 2.400z" fill="#222" stroke="none"/>
<path d="M1068.0 40.500V95.500" stroke="#ebebeb" stroke-width="1"/>
<path d="M1272.1 92.0h3.800l-1.900 2.400z" fill="#222" stroke="none"/>
</svg>
<div id="tb" class="a"></div>
<div class="t r" style="left:30.600px;top:109.800px">菜单<span style="font-size:8.300px;letter-spacing:0.300px">(<u>M</u>)</span></div>
<div class="a" style="left:78.300px;top:107px;width:99px;height:13.500px;border:1px solid #8a8a8a;box-sizing:border-box;background:#fff"></div>
<div class="t r" style="left:81.500px;top:109.500px">无选择过滤器</div>
<div class="a" style="left:211px;top:107px;width:104.500px;height:13.500px;border:1px solid #8a8a8a;box-sizing:border-box;background:#fff"></div>
<div class="t r" style="left:213.500px;top:109.500px">整个装配</div>
<svg class="a" style="left:0;top:96px" width="1280" height="40" viewBox="0 96 1280 40" fill="none" stroke-linejoin="round">
<path d="M11 108h12.500M11 113.800h12.500M11 119.500h12.500" stroke="#333" stroke-width="1.300"/>
<path d="M61.300 112.200h4.200l-2.100 2.600z" fill="#222"/>
<path d="M71 103.500v21" stroke="#ececec" stroke-width="1"/>
<path d="M169.700 112.300h5l-2.500 3z" fill="#222"/>
<path d="M306.900 112.300h5l-2.500 3z" fill="#222"/>
<!-- dim funnel -->
<path d="M184 105h13.500l-5 6.500v7.500l-3.500-2v-5.500z" stroke="#d4d4d4" stroke-width="0.900"/>
<ellipse cx="190.700" cy="105" rx="6.700" ry="1.300" stroke="#d4d4d4" stroke-width="0.700"/>
<path d="M197 116.500l-2.300 2.300 2.300 2.300M194.700 118.800h6a2.500 2.500 0 0 1 0 5h-1" stroke="#cfcfcf" stroke-width="0.900"/>
<!-- funnel w list -->
<path d="M322 105h14.500l-5.500 6.800v7.700l-3.500-2v-5.700z" fill="#fff" stroke="#444" stroke-width="0.900"/>
<ellipse cx="329.200" cy="105" rx="7.200" ry="1.400" fill="#fff" stroke="#444" stroke-width="0.800"/>
<rect x="331" y="112" width="10.500" height="12" fill="#fff" stroke="#444" stroke-width="0.900"/>
<path d="M333 115h1.500M336 115h3.500M333 118h1.500M336 118h3.500M333 121h1.500M336 121h3.500" stroke="#444" stroke-width="0.900"/>
<path d="M344.900 111.800h4.200l-2.100 2.600z" fill="#222"/>
<!-- dim 1 -->
<g stroke="#d6d6d6" stroke-width="0.800">
<path d="M359 104h-2.500v14h2.500M370 104h2.500v10"/>
<circle cx="364.500" cy="111.300" r="3.600"/><path d="M364.500 105.500v11.600M358.700 111.300h11.600"/>
<path d="M371 115.500l-2.300 2.300 2.300 2.300M368.700 117.800h5.500a2.500 2.500 0 0 1 0 5h-1"/>
<circle cx="390.800" cy="111.300" r="3.600"/><path d="M390.800 105.500v11.600M385 111.300h11.600"/>
<path d="M387 123h7v-5h5v-4M397 116l2-2 2 2"/>
</g>
<!-- orange cube wire -->
<path d="M411 108.500l9-4.500 8.500 3.500v8l-9 4.500-8.500-3.500zM411 108.500l8.500 3.500 9-4.500M419.500 112v8" stroke="#e8963a" stroke-width="0.900"/>
<circle cx="425.800" cy="118" r="3.700" stroke="#222" stroke-width="0.900" fill="#fff"/><path d="M425.800 112.300v11.400M420.100 118h11.400" stroke="#222" stroke-width="0.900"/>
<rect x="437.500" y="104" width="15" height="14" stroke="#e8963a" stroke-width="0.900"/>
<circle cx="452.700" cy="118" r="3.700" stroke="#222" stroke-width="0.900" fill="#fff"/><path d="M452.700 112.300v11.400M447 118h11.400" stroke="#222" stroke-width="0.900"/>
<path d="M464.100 111.800h4.200l-2.100 2.600z" fill="#222"/>
<!-- gray cubes -->
<path d="M476 109l10.500-5 9.500 4.500v9.500l-10 5.300-10-4.800z" fill="#dedede" stroke="#bdbdbd" stroke-width="0.700"/>
<path d="M476 109l10.500-5 9.500 4.500-10 5z" fill="#f1f1f1" stroke="#bdbdbd" stroke-width="0.600"/>
<path d="M486 113.500v9.800" stroke="#bdbdbd" stroke-width="0.600"/><path d="M486 113.500l10-5v9.500l-10 5.300z" fill="#cfcfcf"/>
<path d="M486 113.500l10-5M486 113.500v4" stroke="#e8963a" stroke-width="0.800"/>
<path d="M502.500 108.500l10.500-4.500 10 4v10l-10 5.300-10.500-4.800z" fill="#dcdcdc" stroke="#b5b5b5" stroke-width="0.700"/>
<path d="M513 104v10.500M502.500 108.500l5 2.500v10.500M523 108l-5 2.700v10.500" stroke="#b5b5b5" stroke-width="0.600"/>
<path d="M513 104l10 4v10l-5 2.800v-10.300l-5 3z" fill="#cacaca"/>
<path d="M513 104l10 4v6M518 110.700l5-2.700" stroke="#e8963a" stroke-width="0.800"/>
<path d="M531 103.500v21" stroke="#ececec" stroke-width="1"/>
<path d="M1271.900 119.200h4.200l-2.100 2.600z" fill="#222"/>
</svg>
<div id="side" class="a"></div>
<div id="nav" class="a"></div>
<div class="a" style="left:1.500px;top:448.500px;width:20px;height:30.500px;background:#fff"></div>
<div class="t" style="left:28.300px;top:147.200px;font-size:7.900px;color:#333">序列编辑器</div>
<div class="a" style="left:28.300px;top:164px;width:142.500px;height:506px;border:1px solid #e6e6e6;box-sizing:border-box;background:#fff"></div>
<div class="a" style="left:31.200px;top:166px;width:21.600px;height:21.500px;border:1.200px solid #9c9c9c;box-sizing:border-box;background:#fff"></div>
<div class="a" style="left:56.400px;top:166px;width:21.600px;height:21.500px;border:1.200px solid #9c9c9c;box-sizing:border-box;background:#fff"></div>
<div class="a" style="left:31.7px;top:192.500px;width:138.6px;height:13.800px;background:#ececec"></div>
<div class="a" style="left:31.7px;top:206.30px;width:15.0px;height:13.33px;background:#f2f2f2"></div>
<div class="a" style="left:46.7px;top:219.63px;width:123.6px;height:13.33px;background:#f7f7f7"></div>
<div class="a" style="left:31.7px;top:219.63px;width:15.0px;height:13.33px;background:#ebebeb"></div>
<div class="a" style="left:31.7px;top:232.97px;width:15.0px;height:13.33px;background:#f2f2f2"></div>
<div class="a" style="left:46.7px;top:246.30px;width:123.6px;height:13.33px;background:#f7f7f7"></div>
<div class="a" style="left:31.7px;top:246.30px;width:15.0px;height:13.33px;background:#ebebeb"></div>
<div class="a" style="left:31.7px;top:259.63px;width:15.0px;height:13.33px;background:#f2f2f2"></div>
<div class="a" style="left:46.7px;top:272.97px;width:123.6px;height:13.33px;background:#f7f7f7"></div>
<div class="a" style="left:31.7px;top:272.97px;width:15.0px;height:13.33px;background:#ebebeb"></div>
<div class="a" style="left:31.7px;top:286.30px;width:15.0px;height:13.33px;background:#f2f2f2"></div>
<div class="a" style="left:46.7px;top:299.63px;width:123.6px;height:13.33px;background:#f7f7f7"></div>
<div class="a" style="left:31.7px;top:299.63px;width:15.0px;height:13.33px;background:#ebebeb"></div>
<div class="a" style="left:31.7px;top:312.96px;width:15.0px;height:13.33px;background:#f2f2f2"></div>
<div class="a" style="left:46.7px;top:326.30px;width:123.6px;height:13.33px;background:#f7f7f7"></div>
<div class="a" style="left:31.7px;top:326.30px;width:15.0px;height:13.33px;background:#ebebeb"></div>
<div class="a" style="left:31.7px;top:339.63px;width:15.0px;height:13.33px;background:#f2f2f2"></div>
<div class="a" style="left:46.7px;top:352.96px;width:123.6px;height:13.33px;background:#f7f7f7"></div>
<div class="a" style="left:31.7px;top:352.96px;width:15.0px;height:13.33px;background:#ebebeb"></div>
<div class="a" style="left:31.7px;top:366.30px;width:15.0px;height:13.33px;background:#f2f2f2"></div>
<div class="a" style="left:46.7px;top:379.63px;width:123.6px;height:13.33px;background:#f7f7f7"></div>
<div class="a" style="left:31.7px;top:379.63px;width:15.0px;height:13.33px;background:#ebebeb"></div>
<div class="a" style="left:31.7px;top:392.96px;width:15.0px;height:13.33px;background:#f2f2f2"></div>
<div class="a" style="left:46.7px;top:406.30px;width:123.6px;height:13.33px;background:#f7f7f7"></div>
<div class="a" style="left:31.7px;top:406.30px;width:15.0px;height:13.33px;background:#ebebeb"></div>
<div class="a" style="left:31.7px;top:419.63px;width:15.0px;height:13.33px;background:#f2f2f2"></div>
<div class="a" style="left:46.7px;top:432.96px;width:123.6px;height:13.33px;background:#f7f7f7"></div>
<div class="a" style="left:31.7px;top:432.96px;width:15.0px;height:13.33px;background:#ebebeb"></div>
<div class="a" style="left:31.7px;top:446.29px;width:15.0px;height:13.33px;background:#f2f2f2"></div>
<div class="a" style="left:46.7px;top:459.63px;width:123.6px;height:13.33px;background:#f7f7f7"></div>
<div class="a" style="left:31.7px;top:459.63px;width:15.0px;height:13.33px;background:#ebebeb"></div>
<div class="a" style="left:31.7px;top:472.96px;width:15.0px;height:13.33px;background:#f2f2f2"></div>
<div class="a" style="left:46.7px;top:486.29px;width:123.6px;height:13.33px;background:#f7f7f7"></div>
<div class="a" style="left:31.7px;top:486.29px;width:15.0px;height:13.33px;background:#ebebeb"></div>
<div class="a" style="left:31.7px;top:499.63px;width:15.0px;height:13.33px;background:#f2f2f2"></div>
<div class="a" style="left:46.7px;top:512.96px;width:123.6px;height:13.33px;background:#f7f7f7"></div>
<div class="a" style="left:31.7px;top:512.96px;width:15.0px;height:13.33px;background:#ebebeb"></div>
<div class="a" style="left:31.7px;top:526.29px;width:15.0px;height:13.33px;background:#f2f2f2"></div>
<div class="a" style="left:46.7px;top:539.63px;width:123.6px;height:13.33px;background:#f7f7f7"></div>
<div class="a" style="left:31.7px;top:539.63px;width:15.0px;height:13.33px;background:#ebebeb"></div>
<div class="a" style="left:31.7px;top:552.96px;width:15.0px;height:13.33px;background:#f2f2f2"></div>
<div class="a" style="left:46.7px;top:566.29px;width:123.6px;height:13.33px;background:#f7f7f7"></div>
<div class="a" style="left:31.7px;top:566.29px;width:15.0px;height:13.33px;background:#ebebeb"></div>
<div class="a" style="left:31.7px;top:579.62px;width:15.0px;height:13.33px;background:#f2f2f2"></div>
<div class="a" style="left:46.7px;top:592.96px;width:123.6px;height:13.33px;background:#f7f7f7"></div>
<div class="a" style="left:31.7px;top:592.96px;width:15.0px;height:13.33px;background:#ebebeb"></div>
<div class="a" style="left:31.7px;top:606.29px;width:15.0px;height:13.33px;background:#f2f2f2"></div>
<div class="a" style="left:46.7px;top:619.62px;width:123.6px;height:13.33px;background:#f7f7f7"></div>
<div class="a" style="left:31.7px;top:619.62px;width:15.0px;height:13.33px;background:#ebebeb"></div>
<div class="a" style="left:31.7px;top:632.96px;width:15.0px;height:13.33px;background:#f2f2f2"></div>
<div class="a" style="left:46.7px;top:646.29px;width:123.6px;height:12.31px;background:#f7f7f7"></div>
<div class="a" style="left:31.7px;top:646.29px;width:15.0px;height:12.31px;background:#ebebeb"></div>
<div class="t" style="left:49.300px;top:194.400px;font-size:7.900px;color:#222">启</div>
<div class="t" style="left:62px;top:194.400px;font-size:7.900px;color:#222">名称</div>
<div class="t" style="left:164.800px;top:194.400px;font-size:7.900px;color:#222;width:5.500px;overflow:hidden">开</div>
<div class="t" style="left:37px;top:207px;font-size:8.500px;color:#222;font-family:'Liberation Serif',serif">1</div>
<div class="a" style="left:48.500px;top:208.500px;width:9px;height:9px;border:1px solid #666;border-radius:1.500px;box-sizing:border-box;background:#fff"></div>
<div class="t" style="left:85.300px;top:206.600px;font-size:7.900px;color:#222">根</div>
<div class="a" style="left:31.500px;top:659px;width:139px;height:10.500px;background:#f0f0f0"></div>
<div class="a" style="left:43.400px;top:659.500px;width:44.400px;height:9.500px;background:#c9c9c9"></div>
<div class="a" style="left:28.500px;top:675px;width:142px;height:10.600px;background:#f1f1f1"></div>
<div class="a" style="left:39.800px;top:675.500px;width:43px;height:9.600px;background:#c9c9c9"></div>
<svg class="a" style="left:0;top:140px" width="182" height="552" viewBox="0 140 182 552">
<path d="M31.7 219.63H170.3" stroke="#ebebeb" stroke-width="0.700"/>
<path d="M31.7 232.97H170.3" stroke="#ebebeb" stroke-width="0.700"/>
<path d="M31.7 246.30H170.3" stroke="#ebebeb" stroke-width="0.700"/>
<path d="M31.7 259.63H170.3" stroke="#ebebeb" stroke-width="0.700"/>
<path d="M31.7 272.97H170.3" stroke="#ebebeb" stroke-width="0.700"/>
<path d="M31.7 286.30H170.3" stroke="#ebebeb" stroke-width="0.700"/>
<path d="M31.7 299.63H170.3" stroke="#ebebeb" stroke-width="0.700"/>
<path d="M31.7 312.96H170.3" stroke="#ebebeb" stroke-width="0.700"/>
<path d="M31.7 326.30H170.3" stroke="#ebebeb" stroke-width="0.700"/>
<path d="M31.7 339.63H170.3" stroke="#ebebeb" stroke-width="0.700"/>
<path d="M31.7 352.96H170.3" stroke="#ebebeb" stroke-width="0.700"/>
<path d="M31.7 366.30H170.3" stroke="#ebebeb" stroke-width="0.700"/>
<path d="M31.7 379.63H170.3" stroke="#ebebeb" stroke-width="0.700"/>
<path d="M31.7 392.96H170.3" stroke="#ebebeb" stroke-width="0.700"/>
<path d="M31.7 406.30H170.3" stroke="#ebebeb" stroke-width="0.700"/>
<path d="M31.7 419.63H170.3" stroke="#ebebeb" stroke-width="0.700"/>
<path d="M31.7 432.96H170.3" stroke="#ebebeb" stroke-width="0.700"/>
<path d="M31.7 446.29H170.3" stroke="#ebebeb" stroke-width="0.700"/>
<path d="M31.7 459.63H170.3" stroke="#ebebeb" stroke-width="0.700"/>
<path d="M31.7 472.96H170.3" stroke="#ebebeb" stroke-width="0.700"/>
<path d="M31.7 486.29H170.3" stroke="#ebebeb" stroke-width="0.700"/>
<path d="M31.7 499.63H170.3" stroke="#ebebeb" stroke-width="0.700"/>
<path d="M31.7 512.96H170.3" stroke="#ebebeb" stroke-width="0.700"/>
<path d="M31.7 526.29H170.3" stroke="#ebebeb" stroke-width="0.700"/>
<path d="M31.7 539.63H170.3" stroke="#ebebeb" stroke-width="0.700"/>
<path d="M31.7 552.96H170.3" stroke="#ebebeb" stroke-width="0.700"/>
<path d="M31.7 566.29H170.3" stroke="#ebebeb" stroke-width="0.700"/>
<path d="M31.7 579.62H170.3" stroke="#ebebeb" stroke-width="0.700"/>
<path d="M31.7 592.96H170.3" stroke="#ebebeb" stroke-width="0.700"/>
<path d="M31.7 606.29H170.3" stroke="#ebebeb" stroke-width="0.700"/>
<path d="M31.7 619.62H170.3" stroke="#ebebeb" stroke-width="0.700"/>
<path d="M31.7 632.96H170.3" stroke="#ebebeb" stroke-width="0.700"/>
<path d="M31.7 646.29H170.3" stroke="#ebebeb" stroke-width="0.700"/>
<path d="M31.7 658.60H170.3" stroke="#ebebeb" stroke-width="0.700"/>
<path d="M46.7 192.500V658.600" stroke="#e2e2e2" stroke-width="0.800"/>
<path d="M59.5 192.500V658.600" stroke="#e2e2e2" stroke-width="0.800"/>
<path d="M162.5 192.500V658.600" stroke="#e2e2e2" stroke-width="0.800"/>
<path d="M65.800 208v5h4" fill="none" stroke="#d0d0d0" stroke-width="0.700"/>
<path d="M73 217v-6.500h2l1-1.200h3l1 1.200h2.500v6.500z" fill="#fff" stroke="#444" stroke-width="0.800" stroke-linejoin="round"/><path d="M74.500 209.500a2.500 2 0 0 1 4.500-0.500" fill="none" stroke="#e8a030" stroke-width="0.800"/><path d="M76.800 213h3v3h-3z" fill="#fff" stroke="#444" stroke-width="0.600"/><path d="M75 214.500h3M77.200 213.500l1 1-1 1" fill="none" stroke="#444" stroke-width="0.600"/>
<circle cx="38.300" cy="172.400" r="3.200" fill="#fdf0f2" stroke="#6a6494" stroke-width="1"/><path d="M38.300 170.400v2h1.600" fill="none" stroke="#d04050" stroke-width="0.700"/><path d="M37 178.600h12" stroke="#2a3fc0" stroke-width="2"/><path d="M39.500 178.600h2.500M44.500 178.600h1.500" stroke="#30b8d8" stroke-width="2"/><path d="M36.500 182.400h13" stroke="#333" stroke-width="1.300"/><path d="M36.700 181v2.800M49.300 181v2.800" stroke="#333" stroke-width="0.900"/><path d="M39.500 182.400h2M43.500 182.400h2" stroke="#fff" stroke-width="0.600"/>
<path d="M60.700 183.200q1.500-4 4.100-5.400t5.300-2.700t3.800-5.300" fill="none" stroke="#5ab8a8" stroke-width="0.900"/><circle cx="60.700" cy="183.200" r="1.300" fill="#c48a50"/><circle cx="64.800" cy="177.800" r="1.300" fill="#c48a50"/><circle cx="70.100" cy="175.100" r="1.300" fill="#c48a50"/><circle cx="73.900" cy="169.800" r="1.300" fill="#c48a50"/>
<rect x="161.500" y="149.500" width="6.800" height="6.500" fill="#fff" stroke="#333" stroke-width="0.900"/><path d="M161.500 150.300h6.800" stroke="#333" stroke-width="1.400"/>
<path d="M38.500 662l-2.300 2.300 2.300 2.300M35.300 678l-2.300 2.300 2.300 2.300M163.200 678l2.300 2.300-2.300 2.300" fill="none" stroke="#444" stroke-width="1.300"/>
<path d="M25 688.700H174" stroke="#e4e4e4" stroke-width="0.800"/>
<path d="M14.21 149.95 L14.21 151.65 L13.31 151.58 L12.89 152.58 L13.58 153.18 L12.38 154.38 L11.78 153.69 L10.78 154.11 L10.85 155.01 L9.15 155.01 L9.22 154.11 L8.22 153.69 L7.62 154.38 L6.42 153.18 L7.11 152.58 L6.69 151.58 L5.79 151.65 L5.79 149.95 L6.69 150.02 L7.11 149.02 L6.42 148.42 L7.62 147.22 L8.22 147.91 L9.22 147.49 L9.15 146.59 L10.85 146.59 L10.78 147.49 L11.78 147.91 L12.38 147.22 L13.58 148.42 L12.89 149.02 L13.31 150.02z" fill="#333"/><circle cx="10" cy="150.800" r="2.500" fill="#dcdcdc"/><circle cx="10" cy="150.800" r="1.100" fill="none" stroke="#333" stroke-width="0"/>
<circle cx="7.6" cy="181.4" r="2.800" fill="#a4a4a4" stroke="#505050" stroke-width="0.800"/><circle cx="7.6" cy="181.4" r="0.700" fill="#cfcfcf" stroke="none"/>
<circle cx="15.6" cy="181.4" r="2.800" fill="#a4a4a4" stroke="#505050" stroke-width="0.800"/><circle cx="15.6" cy="181.4" r="0.700" fill="#cfcfcf" stroke="none"/>
<circle cx="7.6" cy="187.8" r="2.800" fill="#a4a4a4" stroke="#505050" stroke-width="0.800"/><circle cx="7.6" cy="187.8" r="0.700" fill="#cfcfcf" stroke="none"/>
<circle cx="15.6" cy="187.8" r="2.800" fill="#a4a4a4" stroke="#505050" stroke-width="0.800"/><circle cx="15.6" cy="187.8" r="0.700" fill="#cfcfcf" stroke="none"/>
<rect x="4.500" y="206" width="5" height="5" fill="#f5d84a" stroke="#c8a820" stroke-width="0.500"/><path d="M7 211v8h4M7 214h4" fill="none" stroke="#777" stroke-width="0.700"/><path d="M11 214h8.500M14.500 219h5" stroke="#555" stroke-width="0.900"/><rect x="11" y="217.300" width="3.400" height="3.200" fill="#f0d050" stroke="#a89020" stroke-width="0.400"/>
<circle cx="9.300" cy="240.300" r="4.600" fill="#f4f4f4" stroke="#555" stroke-width="0.900"/><path d="M12.600 243.800l4 4.200" stroke="#555" stroke-width="1.500" stroke-linecap="round"/><path d="M6.800 242.500l5-4.500" stroke="#c4262e" stroke-width="1.300"/><path d="M14.500 233.500l2 1.800-2 1.800M17 233.500l2 1.800-2 1.800" fill="none" stroke="#2a4fc8" stroke-width="0.800"/>
<rect x="4.500" y="261" width="14.500" height="16" fill="#f2f2f2" stroke="#555" stroke-width="0.800"/>
<path d="M8 291l5-2.500 4.500 2v5.500l-3 1.500v4.500l-5 2.500-3.500-1.700v-6l2-1z" fill="#e6e6e6" stroke="#555" stroke-width="0.800" stroke-linejoin="round"/><path d="M8 291l4.500 2 5-2.500M12.500 293v4.500l-3 1.500v5.500M6 296.800l3.500 1.700" fill="none" stroke="#555" stroke-width="0.600"/>
<circle cx="12.500" cy="320.500" r="3.600" fill="#cfcfcf" stroke="#888" stroke-width="0.600"/><path d="M4.300 320l4-1.800 3.800 1.500v9l-3.800 2-4-1.700z" fill="#e4e4e4" stroke="#777" stroke-width="0.600" stroke-linejoin="round"/><path d="M4.300 320l4-1.800 3.800 1.500v4.300l-3.800 1.800-4-1.600z" fill="#f58a1c"/><path d="M4.300 320l4 1.600 3.800-1.900" fill="none" stroke="#fbc080" stroke-width="0.600"/><path d="M11.500 324l8 8v-8l-8 8z" fill="#fff" stroke="#333" stroke-width="0.900" stroke-linejoin="round"/>
<path d="M5 354.5q0.500-7 5.500-9.500q3-1 3.500 2v4.500l5 2.300v3.200l-6.500 3.200-7.500-3.500z" fill="#b4b4b4" stroke="#4a4a4a" stroke-width="0.800" stroke-linejoin="round"/><path d="M5 354.8l7.500 3.300 6.500-3.200M14 352.0l-2 1.200" fill="none" stroke="#4a4a4a" stroke-width="0.600"/><ellipse cx="11" cy="355.8" rx="2.200" ry="1.200" fill="#e8e8e8" stroke="#4a4a4a" stroke-width="0.500"/>
<path d="M6.500 376l3-2.500h8v12.500l-3 2.500h-8z" fill="#c4c4c4" stroke="#555" stroke-width="0.800" stroke-linejoin="round"/><path d="M6.500 376h8l3-2.500M14.500 376v12.500M8.500 376v12.500" fill="none" stroke="#555" stroke-width="0.600"/>
<path d="M5 411.0q0.500-7 5.500-9.500q3-1 3.500 2v4.500l5 2.300v3.200l-6.500 3.200-7.500-3.500z" fill="#b4b4b4" stroke="#4a4a4a" stroke-width="0.800" stroke-linejoin="round"/><path d="M5 411.3l7.500 3.300 6.500-3.200M14 408.5l-2 1.200" fill="none" stroke="#4a4a4a" stroke-width="0.600"/><ellipse cx="11" cy="412.3" rx="2.200" ry="1.200" fill="#e8e8e8" stroke="#4a4a4a" stroke-width="0.500"/>
<path d="M12 402.500l3-2 3 2M15 400.500v4M18.500 401v6.500" fill="none" stroke="#e8842c" stroke-width="0.900"/>
<path d="M4.500 435l6-3 6 2.500v6l-6 3-6-2.500z" fill="#d8d8d8" stroke="#555" stroke-width="0.800" stroke-linejoin="round"/><path d="M4.500 435l6 2.500 6-3" fill="none" stroke="#555" stroke-width="0.600"/><path d="M6.500 431.500l3-1.500 3 1.200" fill="none" stroke="#e8842c" stroke-width="0.900"/><circle cx="15.800" cy="439.500" r="3.400" fill="#fff" stroke="#444" stroke-width="0.900"/><path d="M13.500 442l-2.500 2.500" stroke="#444" stroke-width="1.200"/>
<circle cx="11.300" cy="464" r="7.300" fill="#fff" stroke="#444" stroke-width="0.900"/><path d="M11.300 464v-7.300a7.300 7.300 0 0 1 7.300 7.300z" fill="#e8842c" stroke="#a85a10" stroke-width="0.500"/><path d="M11.300 464h-4" stroke="#444" stroke-width="0.700"/>
<circle cx="9.500" cy="502" r="5.800" fill="#9a9a9a" stroke="#6a6a6a" stroke-width="0.700"/><path d="M9.500 500.500v5" stroke="#e4e4e4" stroke-width="1.300"/><circle cx="9.500" cy="498.800" r="0.750" fill="#e4e4e4"/><path d="M12 496.500a7 7 0 0 1 4.500 4.500M13.500 494a9.500 9.500 0 0 1 5.500 6" fill="none" stroke="#c4c4c4" stroke-width="0.800"/>
<rect x="4" y="529" width="14.500" height="15.500" fill="#f4f4f4" stroke="#555" stroke-width="0.900"/><path d="M4 531.500h14.500" stroke="#555" stroke-width="0.700"/><circle cx="11.200" cy="538" r="4.800" fill="#3aa0b8" stroke="#1a6a88" stroke-width="0.600"/><path d="M8 536q2-2 3.500 0t3 1M9 541q2-2 4.500-1" fill="none" stroke="#cfeaf0" stroke-width="0.800"/>
<circle cx="11.300" cy="572" r="7.300" fill="#f8f8f8" stroke="#444" stroke-width="0.900"/><path d="M11.300 566.500v5.500h-4.500" fill="none" stroke="#444" stroke-width="0.800"/>
<defs><linearGradient id="rb" x1="0" y1="0" x2="0" y2="1"><stop offset="0" stop-color="#e02020"/><stop offset="0.250" stop-color="#f0e020"/><stop offset="0.550" stop-color="#20c040"/><stop offset="0.800" stop-color="#20b0e0"/><stop offset="1" stop-color="#2040d0"/></linearGradient></defs><rect x="4" y="592" width="5.500" height="16" fill="url(#rb)"/><path d="M12 596.500l4.800 9.500" stroke="#111" stroke-width="1.900" stroke-linecap="round"/><path d="M11 592.500l2 1.500" stroke="#e8842c" stroke-width="1.200"/>
<path d="M4.500 623.500h4l1.500-1.500h3l1.500 1.500h5v13h-15z" fill="#fafafa" stroke="#555" stroke-width="0.900" stroke-linejoin="round"/><path d="M7 626l9 9M16 626l-9 9" stroke="#333" stroke-width="1.600"/><path d="M14.500 625l3 3M6 628.500l2.500-2.500" stroke="#333" stroke-width="1.400"/>
<rect x="4" y="649.500" width="15.500" height="14" fill="#fafafa" stroke="#555" stroke-width="0.900"/><rect x="6" y="652" width="2.800" height="2.800" fill="#4a5ad8"/><rect x="14.500" y="652" width="2.800" height="2.800" fill="#4a5ad8"/><path d="M9 653.500h5" stroke="#333" stroke-width="0.700"/><path d="M6 658h3l1.500 1.500-1.500 1.500h-3z" fill="#fff" stroke="#4a5ad8" stroke-width="0.700"/><rect x="14" y="658" width="3.500" height="3" fill="#aaa" stroke="#4a5ad8" stroke-width="0.500"/><path d="M10.500 661.500h3.500" stroke="#333" stroke-width="0.700"/>
</svg>
<div class="t" style="left:5.300px;top:260.700px;font-size:6.800px;line-height:8px;height:8px;color:#444;letter-spacing:-0.200px">P1=</div>
<div class="t" style="left:5.300px;top:268.200px;font-size:6.800px;line-height:8px;height:8px;color:#444;letter-spacing:-0.200px">P2=</div>
<div id="tabline" class="a"></div>
<div id="view" class="a"></div>
<div class="a" style="left:244.200px;top:142.800px;width:121.800px;height:16px;background:#0e6888"></div>
<div class="t" style="left:198px;top:145.200px;font-size:7.900px;color:#333">发现中心</div>
<div class="t" style="left:261.600px;top:145.100px;font-size:8.500px;color:#fff">001001001-零件1.prt</div>
<svg class="a" style="left:180px;top:140px" width="200" height="20" viewBox="180 140 200 20" fill="none">
<rect x="184.500" y="146.500" width="5.500" height="8.500" rx="1.200" stroke="#444" stroke-width="0.900"/><circle cx="187.500" cy="152.300" r="2.300" stroke="#444" stroke-width="0.800"/><path d="M186.200 146.500v3.500M191.500 146v9.500h2.500v-9.500z" stroke="#444" stroke-width="0.800"/>
<circle cx="252" cy="150.800" r="1.800" stroke="#fff" stroke-width="1"/><path d="M255.500 146v9.500M254 146h1.500M254 155.500h1.500" stroke="#fff" stroke-width="0.900"/>
<path d="M345.500 147.500h4l1.500 1.500v5.500h-5.500z" stroke="#fff" stroke-width="1"/><path d="M348 151.500h3.500" stroke="#fff" stroke-width="0.900"/>
<path d="M356.500 148.300l4.800 4.800M361.300 148.300l-4.800 4.800" stroke="#fff" stroke-width="1.500"/>
</svg>
<svg class="a" style="left:0;top:0" width="1280" height="720" viewBox="0 0 1280 720">
<g stroke-linejoin="round" stroke-width="0.7">
<polygon points="389.2,376.5 611.4,304.6 770.5,475 548.75,545" fill="#ffff05" stroke="#6a6a00"/>
<polygon points="389.2,376.5 548.75,545 541.25,577 380.4,407.7" fill="#c9c908" stroke="#5a5a00"/>
<polygon points="548.75,545 770.5,475 764.5,505.5 541.25,577" fill="#c9c908" stroke="#5a5a00"/>
<polygon points="563.5,392.5 582.5,414.4 548.75,545 528.75,523.75" fill="#8183ba" stroke="#3c3c66"/>
<polygon points="582.5,414.4 805.2,343.1 770.5,475 548.75,545" fill="#8989bf" stroke="#3c3c66"/>
<polygon points="563.5,392.5 785,321.7 805.2,343.1 582.5,414.4" fill="#d0d0fb" stroke="#50507a"/>
</g>
<g fill="none" stroke="#a4a4a4" stroke-width="0.600">
<polygon points="235,605.3 257.5,599 272.8,615.7 250.8,622"/>
<polyline points="235,605.3 229.4,626.1 245.7,643.5 250.8,622"/>
<polyline points="245.7,643.5 267.9,635.8 272.8,615.7"/>
</g>
<line x1="253.6" y1="610.1" x2="257.8" y2="594.5" stroke="#10249c" stroke-width="3" stroke-linecap="round"/>
<polygon points="260.4,585 262.2,596.2 253.6,593.8" fill="#10249c"/>
<line x1="271.9" y1="613.6" x2="281" y2="611.2" stroke="#3f9c3f" stroke-width="2.800" stroke-linecap="round"/>
<polygon points="289.3,609.1 280.3,614.6 279,608.2" fill="#3f9c3f"/>
<line x1="259" y1="629.7" x2="271.5" y2="642.5" stroke="#c43a3a" stroke-width="2.800" stroke-linecap="round"/>
<polygon points="278.4,649.5 268.2,645.2 273.8,639.8" fill="#c43a3a"/>
<text x="258.600" y="582.300" font-size="8" fill="#3a4ab0" font-family="Liberation Sans, sans-serif">Z</text>
<text x="292.3" y="610" font-size="7.5" fill="#7a9a7a" font-family="Liberation Sans, sans-serif">Y</text>
<text x="280.5" y="657.5" font-size="7.5" fill="#c06060" font-family="Liberation Sans, sans-serif">X</text>
</svg>
<div id="status" class="a"></div>
<div id="task" class="a">
<div class="a" style="left:141.200px;top:0;width:107px;height:26.500px;background:#2c3a42"></div>
<div class="a ul" style="left:36.600px;width:101.400px"></div>
<div class="a ul" style="left:141.200px;width:107px"></div>
<div class="a ul" style="left:251.200px;width:101.500px"></div>
<div class="a ul" style="left:358.800px;width:101.600px"></div>
<div class="a ul" style="left:465.400px;width:100.800px"></div>
<div class="a ul" style="left:572.900px;width:100.900px"></div>
<div class="a ul" style="left:680px;width:101.400px"></div>
<div class="t" style="left:59.300px;top:7.2px">直播伴侣</div>
<div class="t" style="left:167px;top:7.2px;font-size:8.300px">NX - 机电概念设计</div>
<div class="t" style="left:273.500px;top:7.2px">小程序直播助手 - ...</div>
<div class="t" style="left:381.200px;top:7.2px">疾风破阵MCD课程</div>
<div class="t" style="left:487.900px;top:7.2px">软件 (D:)</div>
<div class="t" style="left:595.500px;top:7.2px">录屏软件【点我启...</div>
<div class="t" style="left:702.200px;top:7.2px">无标题</div>
<div class="t" style="left:1084px;top:7.0px;font-size:9.600px">17°C</div>
<div class="t" style="left:1110.300px;top:7.2px;font-size:8.900px">晴朗</div>
<div class="t" style="left:1160.300px;top:7.0px;font-size:9.300px">英</div>
<div class="t" style="left:1210px;top:1.6px;font-size:8.200px">20:22</div>
<div class="t" style="left:1202.700px;top:14.6px;font-size:8.200px;letter-spacing:0.330px">2024/5/8</div>
<svg class="a" style="left:0;top:0" width="1280" height="27" viewBox="0 693.500 1280 27" fill="none">
<path d="M10.600 702.200l4.400-0.700v4.500h-4.400zM15.700 701.400l5.600-0.900v5.500h-5.600zM10.600 706.700h4.400v4.500l-4.400-0.700zM15.700 706.700h5.600v5.500l-5.600-0.900z" fill="#fff"/>
<rect x="40.600" y="698.600" width="15.900" height="15.400" rx="3" fill="#e0264a"/><ellipse cx="48.500" cy="706.300" rx="4.800" ry="3.600" stroke="#fff" stroke-width="1.500"/>
<rect x="150" y="698.600" width="14" height="15" fill="#9c1a1a"/><path d="M150 698.600v15.500h14" stroke="#1a8a8a" stroke-width="1"/>
<circle cx="263.200" cy="706.300" r="7.300" fill="#6cc024"/><circle cx="263.200" cy="706.300" r="5.500" stroke="#fff" stroke-width="1"/>
<path d="M365.500 700.600h6.500l2 2v10.800h-8.500z" fill="#f5d060"/><path d="M365.500 700.600h3v12.800h-3z" fill="#e0b030"/>
<path d="M470.500 709l5-3h8.500l-3 3z" fill="#f0f0f0"/><path d="M470.500 709h10.500l3-3v3l-3 3.500h-10.500z" fill="#c8c8c8"/><path d="M470.500 709h10.500v3.500h-10.500z" fill="#dcdcdc"/>
<rect x="577" y="700.600" width="14.500" height="12" fill="#f4f4f4"/><circle cx="582.500" cy="706.800" r="2.200" fill="#f08030"/><rect x="586.500" y="703" width="2.200" height="7.500" fill="#f08030"/>
<path d="M685.500 700.500l12.500-1 0.500 13-13 1z" fill="#d8222c"/><path d="M688 703l8 7.500M696 703l-8 7.500" stroke="#fff" stroke-width="1.800"/>
<path d="M1071.500 702.500a6.500 6.500 0 1 1-9 7.500a8 6 0 0 0 9-7.500z" fill="#f59a23"/><path d="M1062.500 710q6 3 12-1.500l1 1.500q-3 4.500-8 4.200t-5-4.200z" fill="#f59a23"/><circle cx="1074.200" cy="702.300" r="3" fill="#e03a30"/>
<path d="M1145.300 708.800l4-4.600 4 4.600" stroke="#fff" stroke-width="1.100"/>
<path d="M1179 703l9.500-1.500 1.500 9-9.500 1.500z" fill="#f0522a"/>
<path d="M1252.500 701.800h11.500v7.500h-4l-2 2.200v-2.200h-5.500z" stroke="#fff" stroke-width="1"/>
<path d="M1276.800 693.500v27" stroke="#556" stroke-width="0.700"/>
</svg>
<div class="t" style="left:151.300px;top:8.4px;font-size:7.500px;font-weight:bold;letter-spacing:-0.300px">NX</div>
<div class="t" style="left:260.700px;top:6.7px;font-size:9px;font-weight:bold">e</div>
<div class="t" style="left:1181.500px;top:7.4px;font-size:8.500px;font-weight:bold;font-style:italic">S</div>
</div>
</div>
</body>
</html>
